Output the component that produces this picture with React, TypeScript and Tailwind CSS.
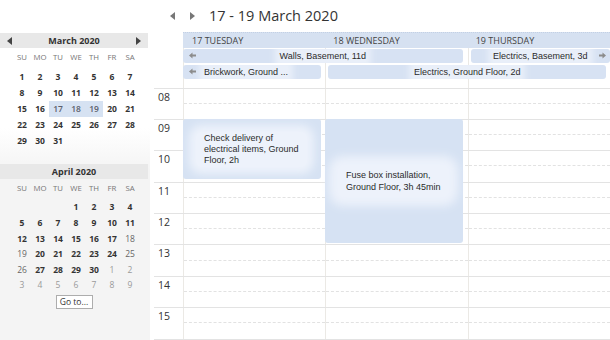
import React from "react";

type Day = { d: number; w?: "b" | "n" | "m"; sel?: boolean } | null;

const ui = { fontFamily: '"Open Sans", "Liberation Sans", sans-serif' };
const arial = { fontFamily: '"Liberation Sans", Arial, sans-serif' };

const mk = (from: number, to: number): Day[] => {
  const out: Day[] = [];
  for (let i = from; i <= to; i++) out.push({ d: i, w: "b" });
  return out;
};

const march: Day[][] = [
  mk(1, 7),
  mk(8, 14),
  mk(15, 21).map((x) => (x && x.d >= 17 && x.d <= 19 ? { ...x, sel: true } : x)),
  mk(22, 28),
  mk(29, 31),
];

const light = [18, 19, 25, 26];
const aprilDays = (from: number, to: number): Day[] =>
  mk(from, to).map((x) => (x && light.includes(x.d) ? { ...x, w: "n" } : x));

const april: Day[][] = [
  [null, null, null, ...aprilDays(1, 4)],
  aprilDays(5, 11),
  aprilDays(12, 18),
  aprilDays(19, 25),
  [...aprilDays(26, 30), { d: 1, w: "m" }, { d: 2, w: "m" }],
  [3, 4, 5, 6, 7, 8, 9].map((d) => ({ d, w: "m" as const })),
];

const Tri = ({ dir, color = "#444" }: { dir: "l" | "r"; color?: string }) => (
  <svg width="5" height="8" viewBox="0 0 5 8">
    {dir === "l" ? (
      <path d="M5 0 L0 4 L5 8 Z" fill={color} />
    ) : (
      <path d="M0 0 L5 4 L0 8 Z" fill={color} />
    )}
  </svg>
);

const SmallArrow = ({ dir }: { dir: "l" | "r" }) => (
  <svg width="7" height="7" viewBox="0 0 7 7" className={dir === "r" ? "rotate-180" : ""}>
    <path d="M0 3.5 L3.5 0.5 V2.6 H7 V4.4 H3.5 V6.5 Z" fill="#8c8c8c" />
  </svg>
);

const MiniMonth = ({
  title,
  rows,
  arrows,
  rowH,
}: {
  title: string;
  rows: Day[][];
  arrows?: boolean;
  rowH: string;
}) => (
  <div>
    <div className="w-[148px] h-[15px] bg-[#e8e8e8] flex items-center justify-between px-[7px]">
      <span className="w-[5px]">{arrows && <Tri dir="l" />}</span>
      <span className="text-[9px] font-bold text-[#333]">{title}</span>
      <span className="w-[5px]">{arrows && <Tri dir="r" />}</span>
    </div>
    <div className="grid grid-cols-7 w-[126px] ml-[13px] h-[19px] items-center">
      {["SU", "MO", "TU", "WE", "TH", "FR", "SA"].map((n) => (
        <span key={n} className="text-center text-[7.8px] text-[#777]">
          {n}
        </span>
      ))}
    </div>
    <div className="grid grid-cols-7 w-[126px] ml-[13px] mt-[2px]">
      {rows.flat().map((c, i) => (
        <span
          key={i}
          className={`${rowH} flex items-center justify-center text-[8.5px] ${
            !c
              ? ""
              : c.sel
              ? "bg-[#d6e2f2] text-[#5b5f6b] font-semibold"
              : c.w === "b"
              ? "font-bold text-[#333]"
              : c.w === "n"
              ? "text-[#666]"
              : "text-[#9a9a9a]"
          }`}
        >
          {c ? c.d : ""}
        </span>
      ))}
    </div>
  </div>
);

const Bar = ({
  label,
  left,
  right,
  align = "center",
  className = "",
}: {
  label: string;
  left?: boolean;
  right?: boolean;
  align?: "center" | "left";
  className?: string;
}) => (
  <div
    className={`relative h-[14px] rounded-[3px] bg-[#d7e2f3] flex items-center overflow-hidden ${
      align === "center" ? "justify-center" : "pl-[21px]"
    } ${className}`}
    style={arial}
  >
    {left && (
      <span className="absolute left-[6px] top-[3px] flex">
        <SmallArrow dir="l" />
      </span>
    )}
    <span className="text-[9px] text-[#2b2b2b] bg-[#e9eff9] shadow-[0_0_6px_5px_#e9eff9] leading-[12px] whitespace-nowrap">
      {label}
    </span>
    {right && (
      <span className="absolute right-[4px] top-[3px] flex">
        <SmallArrow dir="r" />
      </span>
    )}
  </div>
);

const hours = ["08", "09", "10", "11", "12", "13", "14", "15", ""];

export default function App() {
  return (
    <div className="w-[610px] h-[340px] flex bg-white overflow-hidden" style={ui}>
      {/* mini calendars */}
      <div className="w-[150px] shrink-0 flex flex-col bg-[linear-gradient(to_bottom,#ffffff_0px,#ffffff_128px,#f4f4f4_170px,#f4f4f4_100%)]">
        <div className="h-[33px]" />
        <MiniMonth title="March 2020" rows={march} arrows rowH="h-[16px]" />
        <div className="h-[15px]" />
        <MiniMonth title="April 2020" rows={april} rowH="h-[15.6px]" />
        <div className="flex justify-center pr-[2px] mt-[1px]">
          <button className="w-[37px] h-[14px] border border-[#adadad] bg-white text-[8.5px] text-[#333] leading-[12px]">
            Go to...
          </button>
        </div>
      </div>

      {/* scheduler */}
      <div className="flex-1 flex flex-col">
        <div className="h-[32px] flex items-center shrink-0">
          <span className="ml-[20px] flex">
            <Tri dir="l" color="#777" />
          </span>
          <span className="ml-[15px] flex">
            <Tri dir="r" color="#777" />
          </span>
          <span className="ml-[14px] text-[14.5px] text-[#333] leading-none">17 - 19 March 2020</span>
        </div>

        <div className="flex shrink-0">
          <div className="w-[33px]" />
          <div className="w-[427px]">
            <div className="h-[16px] bg-[#d6e1f1] border-t border-dotted border-[#c3d0e4] grid grid-cols-3 items-center text-[9px] text-[#444]">
              <span className="pl-[9px]">17 TUESDAY</span>
              <span className="pl-[8px]">18 WEDNESDAY</span>
              <span className="pl-[8px]">19 THURSDAY</span>
            </div>
            <div className="relative h-[39.5px]">
              <div className="absolute inset-0 grid grid-cols-3">
                <div className="border-l border-[#ebe9e5]" />
                <div className="border-l border-[#ebe9e5]" />
                <div className="border-l border-[#ebe9e5]" />
              </div>
              <div className="relative grid grid-cols-3 gap-y-[2px] pt-[1px]">
                <Bar label="Walls, Basement, 11d" left className="col-span-2 mr-[5px]" />
                <Bar label="Electrics, Basement, 3d" right className="ml-[3px]" />
                <Bar label="Brickwork, Ground ..." left align="left" className="mr-[4px]" />
                <Bar label="Electrics, Ground Floor, 2d" className="col-span-2 ml-[3px] mr-[4px]" />
              </div>
            </div>
          </div>
        </div>

        <div className="relative">
          {hours.map((h, i) => (
            <div key={i} className="flex h-[31.4px]">
              <div className="w-[33px] pl-[4px]">
                <div className="h-full border-t border-[#e3e3e3] pl-[4px] pt-[1px] text-[10.5px] leading-[14px] text-[#333]">
                  {h}
                </div>
              </div>
              <div className="w-[427px] grid grid-cols-3 border-t border-[#e3e3e3]">
                {[0, 1, 2].map((c) => (
                  <div key={c} className="border-l border-[#ebe9e5]">
                    <div className="h-[15.2px] border-b border-dashed border-[#e2e2e2]" />
                  </div>
                ))}
              </div>
            </div>
          ))}

          <div className="absolute top-[31.5px] left-[33px] w-[138px] h-[60px] rounded-[3px] bg-[#d6e2f3] flex items-center px-[13px]">
            <div
              className="text-[9px] leading-[11px] text-[#2b2b2b] bg-[#edf2fb] shadow-[0_0_8px_7px_#edf2fb] px-[8px] py-[1px] rounded-[6px]"
              style={arial}
            >
              Check delivery of
              <br />
              electrical items, Ground
              <br />
              Floor, 2h
            </div>
          </div>

          <div className="absolute top-[31.5px] left-[175px] w-[138px] h-[124px] rounded-[3px] bg-[#d6e2f3] flex items-center px-[13px]">
            <div
              className="text-[9px] leading-[12px] text-[#2b2b2b] bg-[#edf2fb] shadow-[0_0_10px_9px_#edf2fb] px-[8px] py-[4px] rounded-[6px]"
              style={arial}
            >
              Fuse box installation,
              <br />
              Ground Floor, 3h 45min
            </div>
          </div>
        </div>
      </div>
    </div>
  );
}
